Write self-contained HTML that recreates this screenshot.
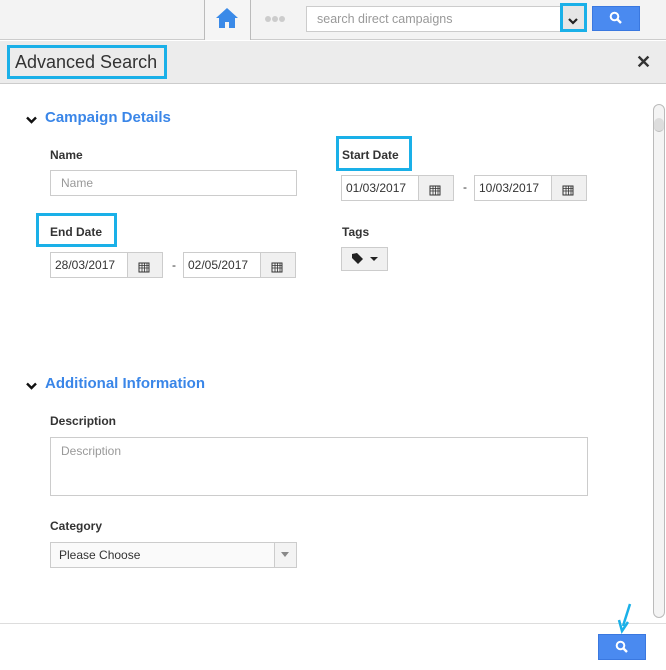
<!DOCTYPE html>
<html><head><style>
*{box-sizing:border-box;margin:0;padding:0}
body{width:666px;height:670px;position:relative;background:#fff;font-family:"Liberation Sans",sans-serif;overflow:hidden;color:#333}
.a{position:absolute}
.lbl{font-size:12px;font-weight:bold;color:#333}
.inp{border:1px solid #ccc;background:#fff;font-size:12px;color:#333;padding-left:4px;line-height:24px;height:26px}
.cal{border:1px solid #ccc;background:#f0f0f0;height:26px}
.blue{color:#3a86e8;font-size:15px;font-weight:bold}
.cy{border:3px solid #1ab0e8}
</style></head><body>
<div class="a" style="left:0;top:0;width:666px;height:40px;background:#f3f3f3;border-bottom:1px solid #ccc"></div>
<div class="a" style="left:204px;top:0;width:47px;height:40px;border-left:1px solid #bbb;border-right:1px solid #bbb;background:#f5f5f5"></div>
<svg class="a" style="left:215px;top:7px" width="24" height="22" viewBox="0 0 24 22"><path d="M12 1 L1 11 L4 11 L4 21 L10 21 L10 15 L14 15 L14 21 L20 21 L20 11 L23 11 Z" fill="#3a8ae8"/></svg>
<svg class="a" style="left:264px;top:15px" width="22" height="8"><circle cx="4" cy="4" r="3" fill="#ccc"/><circle cx="11" cy="4" r="3" fill="#ccc"/><circle cx="18" cy="4" r="3" fill="#ccc"/></svg>
<div class="a inp" style="left:306px;top:6px;width:258px;height:26px;color:#999;padding-left:10px;font-size:12.5px">search direct campaigns</div>
<div class="a cy" style="left:560px;top:3px;width:27px;height:29px;background:#e6e6e6"></div>
<svg class="a" style="left:568px;top:18px" width="10" height="7" viewBox="0 0 10 7"><path d="M1 1 L5 5 L9 1" stroke="#222" stroke-width="2.2" fill="none"/></svg>
<div class="a" style="left:592px;top:6px;width:48px;height:25px;background:#4a8af0;border:1px solid #3a78e0"></div>
<svg class="a" style="left:609px;top:11px" width="14" height="14" viewBox="0 0 14 14"><circle cx="5.5" cy="5.5" r="3.8" stroke="#fff" stroke-width="2" fill="none"/><path d="M8.5 8.5 L12 12" stroke="#fff" stroke-width="2.4"/></svg>
<div class="a" style="left:0;top:41px;width:666px;height:43px;background:#ececec;border-bottom:1px solid #ccc"></div>
<div class="a cy" style="left:7px;top:45px;width:160px;height:34px"></div>
<div class="a" style="left:15px;top:52px;font-size:18px;color:#333">Advanced Search</div>
<div class="a" style="left:636px;top:52px;font-size:18px;font-weight:bold;color:#333">✕</div>
<svg class="a" style="left:26px;top:116px" width="11" height="8" viewBox="0 0 11 8"><path d="M1 1.5 L5.5 6 L10 1.5" stroke="#111" stroke-width="2.4" fill="none"/></svg>
<div class="a blue" style="left:45px;top:109px">Campaign Details</div>
<div class="a lbl" style="left:50px;top:148px">Name</div>
<div class="a inp" style="left:50px;top:170px;width:247px;color:#999;padding-left:10px">Name</div>
<div class="a cy" style="left:336px;top:136px;width:76px;height:35px"></div>
<div class="a lbl" style="left:342px;top:148px">Start Date</div>
<div class="a inp" style="left:341px;top:175px;width:78px">01/03/2017</div>
<div class="a cal" style="left:418px;top:175px;width:36px"></div>
<div class="a" style="left:463px;top:180px;font-size:12px">-</div>
<div class="a inp" style="left:474px;top:175px;width:78px">10/03/2017</div>
<div class="a cal" style="left:551px;top:175px;width:36px"></div>
<div class="a cy" style="left:36px;top:213px;width:81px;height:34px"></div>
<div class="a lbl" style="left:50px;top:225px">End Date</div>
<div class="a inp" style="left:50px;top:252px;width:78px">28/03/2017</div>
<div class="a cal" style="left:127px;top:252px;width:36px"></div>
<div class="a" style="left:172px;top:258px;font-size:12px">-</div>
<div class="a inp" style="left:183px;top:252px;width:78px">02/05/2017</div>
<div class="a cal" style="left:260px;top:252px;width:36px"></div>
<svg class="a" style="left:429px;top:184px" width="12" height="12"><rect x="1" y="2" width="10" height="9" fill="none" stroke="#333"/><path d="M1 4.5H11M1 7H11M4 2V11M6.5 2V11M9 2V11" stroke="#333" stroke-width=".8"/></svg>
<svg class="a" style="left:562px;top:184px" width="12" height="12"><rect x="1" y="2" width="10" height="9" fill="none" stroke="#333"/><path d="M1 4.5H11M1 7H11M4 2V11M6.5 2V11M9 2V11" stroke="#333" stroke-width=".8"/></svg>
<svg class="a" style="left:138px;top:261px" width="12" height="12"><rect x="1" y="2" width="10" height="9" fill="none" stroke="#333"/><path d="M1 4.5H11M1 7H11M4 2V11M6.5 2V11M9 2V11" stroke="#333" stroke-width=".8"/></svg>
<svg class="a" style="left:271px;top:261px" width="12" height="12"><rect x="1" y="2" width="10" height="9" fill="none" stroke="#333"/><path d="M1 4.5H11M1 7H11M4 2V11M6.5 2V11M9 2V11" stroke="#333" stroke-width=".8"/></svg>
<div class="a lbl" style="left:342px;top:225px">Tags</div>
<div class="a cal" style="left:341px;top:247px;width:47px;height:24px"></div>
<svg class="a" style="left:351px;top:252px" width="28" height="14"><path d="M1 2 L6 1 L12 7 L7 12 L1 6 Z" fill="#222"/><path d="M19 5 L27 5 L23 9Z" fill="#222"/></svg>
<svg class="a" style="left:26px;top:382px" width="11" height="8" viewBox="0 0 11 8"><path d="M1 1.5 L5.5 6 L10 1.5" stroke="#111" stroke-width="2.4" fill="none"/></svg>
<div class="a blue" style="left:45px;top:375px">Additional Information</div>
<div class="a lbl" style="left:50px;top:414px">Description</div>
<div class="a inp" style="left:50px;top:437px;width:538px;height:59px;color:#999;padding-left:10px;line-height:26px">Description</div>
<div class="a lbl" style="left:50px;top:519px">Category</div>
<div class="a inp" style="left:50px;top:542px;width:247px;padding-left:8px;background:#fafafa">Please Choose</div>
<div class="a" style="left:274px;top:543px;width:22px;height:24px;border-left:1px solid #ccc;background:#f3f3f3"></div>
<svg class="a" style="left:281px;top:552px" width="8" height="6"><path d="M0 0H8L4 5Z" fill="#888"/></svg>
<div class="a" style="left:653px;top:104px;width:12px;height:514px;border:1px solid #bbb;border-radius:6px;background:#f4f4f4"></div>
<div class="a" style="left:654px;top:118px;width:10px;height:14px;background:#ddd;border-radius:5px;border-bottom:1px solid #bbb"></div>
<div class="a" style="left:0;top:623px;width:666px;height:1px;background:#ddd"></div>
<div class="a" style="left:598px;top:634px;width:48px;height:26px;background:#4a8af0;border:1px solid #3a78e0"></div>
<svg class="a" style="left:615px;top:640px" width="14" height="14" viewBox="0 0 14 14"><circle cx="5.5" cy="5.5" r="3.8" stroke="#fff" stroke-width="2" fill="none"/><path d="M8.5 8.5 L12 12" stroke="#fff" stroke-width="2.4"/></svg>
<svg class="a" style="left:617px;top:602px" width="16" height="32"><path d="M13 2 L6 24" stroke="#1ab0e8" stroke-width="2.5"/><path d="M2 18 L5 29 L11 20" fill="none" stroke="#1ab0e8" stroke-width="2.5"/></svg>
</body></html>
